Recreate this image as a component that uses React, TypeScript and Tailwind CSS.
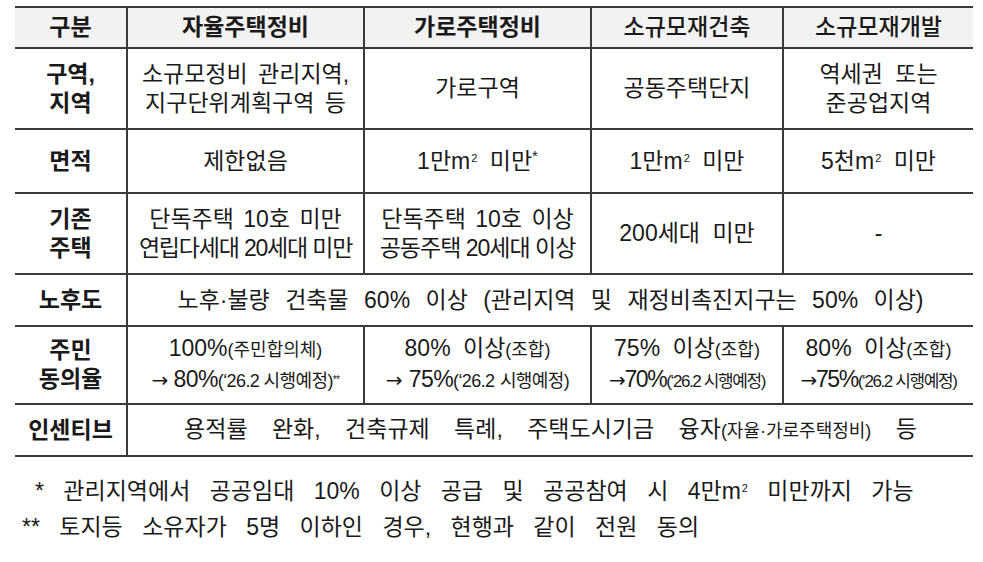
import * as React from 'react';

// column widths taken from the reference table
const COLS = ['w-[111px]', 'w-[237px]', 'w-[227px]', 'w-[192px]', 'w-[191px]'];

function Cell({ i, span, className = '', children }: { i: number; span?: string; className?: string; children: React.ReactNode }) {
  return (
    <div
      className={`${span ?? COLS[i]} flex shrink-0 flex-col items-center justify-center text-center leading-[29px] ${
        i > 0 ? 'border-l-2 border-[#3a3a3a]' : ''
      } ${className}`}
    >
      {children}
    </div>
  );
}

function Row({ h, className = '', children }: { h: string; className?: string; children: React.ReactNode }) {
  return <div className={`flex ${h} border-b-2 border-[#3a3a3a] ${className}`}>{children}</div>;
}

const Sm = ({ children }: { children: React.ReactNode }) => <span className="text-[18px]">{children}</span>;

const Sq = () => <sup className="relative -top-[7px] ml-[1px] text-[11px]">2</sup>;

// long arrow, as in the source document
const Arrow = () => <span className="font-['DejaVu_Sans'] text-[20px]">→</span>;

export default function App() {
  return (
    <div className="h-[562px] w-[983px] bg-white pl-[15px] pt-[6px] font-['Liberation_Sans','Noto_Sans_CJK_KR',sans-serif] text-[23px] text-[#1a1a1a] [word-spacing:6px]">
      <div className="w-[958px] border-t-2 border-[#3a3a3a]">
        {/* header */}
        <Row h="h-[41px]" className="bg-[#f2f2f2] font-bold">
          <Cell i={0}>구분</Cell>
          <Cell i={1}>자율주택정비</Cell>
          <Cell i={2}>가로주택정비</Cell>
          <Cell i={3} className="font-medium">소규모재건축</Cell>
          <Cell i={4} className="font-medium">소규모재개발</Cell>
        </Row>

        <Row h="h-[81px]">
          <Cell i={0} className="font-bold">
            <span>구역,</span>
            <span>지역</span>
          </Cell>
          <Cell i={1} className="[word-spacing:4px]">
            <span>소규모정비 관리지역,</span>
            <span>지구단위계획구역 등</span>
          </Cell>
          <Cell i={2}>가로구역</Cell>
          <Cell i={3}>공동주택단지</Cell>
          <Cell i={4}>
            <span>역세권 또는</span>
            <span>준공업지역</span>
          </Cell>
        </Row>

        <Row h="h-[64px]">
          <Cell i={0} className="font-bold">면적</Cell>
          <Cell i={1}>제한없음</Cell>
          <Cell i={2}>
            <span>
              1만m<Sq /> 미만<sup className="relative -top-[8px] text-[15px]">*</sup>
            </span>
          </Cell>
          <Cell i={3}>
            <span>
              1만m<Sq /> 미만
            </span>
          </Cell>
          <Cell i={4}>
            <span>
              5천m<Sq /> 미만
            </span>
          </Cell>
        </Row>

        <Row h="h-[81px]">
          <Cell i={0} className="font-bold">
            <span>기존</span>
            <span>주택</span>
          </Cell>
          <Cell i={1}>
            <span className="[word-spacing:3px]">단독주택 10호 미만</span>
            <span className="tracking-[-1.2px] [word-spacing:0px]">연립다세대 20세대 미만</span>
          </Cell>
          <Cell i={2}>
            <span className="[word-spacing:3px]">단독주택 10호 이상</span>
            <span className="tracking-[-1px] [word-spacing:0px]">공동주택 20세대 이상</span>
          </Cell>
          <Cell i={3}>200세대 미만</Cell>
          <Cell i={4}>-</Cell>
        </Row>

        <Row h="h-[52px]">
          <Cell i={0} className="font-bold">노후도</Cell>
          <Cell i={1} span="w-[847px]" className="[word-spacing:9px]">
            노후·불량 건축물 60% 이상 (관리지역 및 재정비촉진지구는 50% 이상)
          </Cell>
        </Row>

        <Row h="h-[78px]">
          <Cell i={0} className="font-bold">
            <span>주민</span>
            <span>동의율</span>
          </Cell>
          <Cell i={1} className="[word-spacing:0px]">
            <span>
              100%<Sm>(주민합의체)</Sm>
            </span>
            <span className="tracking-[-0.6px]">
              <Arrow /> 80%<Sm>(‘26.2 시행예정)</Sm>
              <sup className="relative -top-[4px] text-[10px]">**</sup>
            </span>
          </Cell>
          <Cell i={2}>
            <span>
              80% 이상<Sm>(조합)</Sm>
            </span>
            <span className="tracking-[-0.6px] [word-spacing:1px]">
              <Arrow /> 75%<Sm>(‘26.2 시행예정)</Sm>
            </span>
          </Cell>
          <Cell i={3}>
            <span>
              75% 이상<Sm>(조합)</Sm>
            </span>
            <span className="tracking-[-1.4px] [word-spacing:0px]">
              <Arrow />70%<span className="text-[17px]">(‘26.2 시행예정)</span>
            </span>
          </Cell>
          <Cell i={4}>
            <span>
              80% 이상<Sm>(조합)</Sm>
            </span>
            <span className="tracking-[-1.4px] [word-spacing:0px]">
              <Arrow />75%<span className="text-[17px]">(‘26.2 시행예정)</span>
            </span>
          </Cell>
        </Row>

        <Row h="h-[52px]">
          <Cell i={0} className="font-bold">인센티브</Cell>
          <Cell i={1} span="w-[847px]" className="[word-spacing:18px]">
            <span>
              용적률 완화, 건축규제 특례, 주택도시기금 융자<Sm>(자율·가로주택정비)</Sm> 등
            </span>
          </Cell>
        </Row>
      </div>

      {/* footnotes */}
      <div className="mt-[20px] flex flex-col gap-[7px] leading-[29px] [word-spacing:13px]">
        <p className="pl-[20px]">
          * 관리지역에서 공공임대 10% 이상 공급 및 공공참여 시 4만m<Sq /> 미만까지 가능
        </p>
        <p className="pl-[7px]">** 토지등 소유자가 5명 이하인 경우, 현행과 같이 전원 동의</p>
      </div>
    </div>
  );
}
